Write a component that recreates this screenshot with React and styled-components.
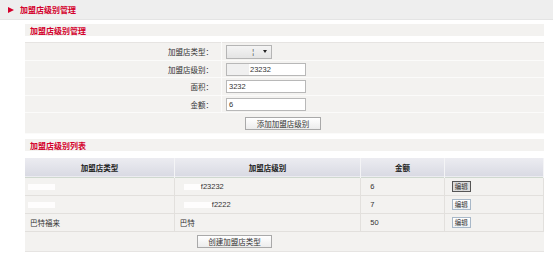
import styled, { createGlobalStyle } from "styled-components";

const GlobalStyle = createGlobalStyle`
  html, body {
    margin: 0;
    padding: 0;
    background: #fff;
    font-family: "Liberation Sans", "Noto Sans CJK SC", sans-serif;
    font-size: 7.5px;
    color: #333;
  }
`;

const Page = styled.div`
  width: 554px;
  height: 259px;
  overflow: hidden;
`;

const TopBar = styled.div`
  height: 20px;
  width: 553px;
  background: #eeeeee;
  border-bottom: 1px solid #e4e4e4;
  display: flex;
  align-items: center;
  gap: 6px;
  padding-left: 8px;
  box-sizing: border-box;
`;

const Arrow = styled.span`
  width: 0;
  height: 0;
  border-top: 3.5px solid transparent;
  border-bottom: 3.5px solid transparent;
  border-left: 6px solid #d4002c;
`;

const Title = styled.span`
  color: #d4002c;
  font-weight: bold;
  font-size: 8px;
`;

const Content = styled.div`
  width: 519px;
  margin-left: 25px;
`;

const SectionHeader = styled.div`
  margin-top: ${(p) => p.$top}px;
  height: 12px;
  background: #f3f2f0;
  display: flex;
  align-items: center;
  padding-left: 5px;
`;

const FormTable = styled.table`
  width: 100%;
  margin-top: 6px;
  border-collapse: collapse;
  background: #f3f2f0;
  border-top: 1px solid #e6e4e2;
`;

const FormRow = styled.tr`
  height: ${(p) => p.$h}px;
  border-bottom: 1px solid #fbfbfa;
`;

const Label = styled.td`
  width: 188px;
  text-align: right;
  padding: 0 8px 0 0;
  border-right: 1px solid #fbfbfa;
`;

const ValueCell = styled.td`
  padding: 0 0 0 4px;
`;

const FakeSelect = styled.div`
  width: 46px;
  height: 14px;
  box-sizing: border-box;
  border: 1px solid #b5b5b5;
  background: linear-gradient(#f4f4f4, #e4e4e4);
  display: flex;
  align-items: center;
  justify-content: flex-end;
  gap: 9px;
  padding-right: 4px;
  font-size: 7px;
`;

const Caret = styled.span`
  width: 0;
  height: 0;
  border-left: 2.5px solid transparent;
  border-right: 2.5px solid transparent;
  border-top: 3px solid #222;
`;

const TextInput = styled.div`
  width: 80px;
  height: 13px;
  box-sizing: border-box;
  border: 1px solid #b8b8b8;
  background: ${(p) => (p.$muted ? "linear-gradient(90deg, #f0f0f0 0, #f0f0f0 22px, #fff 22px)" : "#fff")};
  display: flex;
  align-items: center;
  padding-left: ${(p) => p.$indent}px;
  font-size: 7.5px;
  color: #333;
`;

const Button = styled.div`
  display: inline-flex;
  align-items: center;
  justify-content: center;
  width: ${(p) => p.$w}px;
  height: 13px;
  box-sizing: border-box;
  border: 1px solid #a9a9a9;
  background: linear-gradient(#ffffff, #ececec);
  font-size: 7.5px;
  color: #333;
`;

const CenterCell = styled.td`
  padding: 0 0 0 ${(p) => p.$pad}px;
`;

const ListTable = styled.table`
  width: 100%;
  margin-top: 7px;
  border-collapse: collapse;
  background: #f3f2f0;
`;

const HeadRow = styled.tr`
  height: 19px;
  background: linear-gradient(#ececf1, #d9dae3);
  border-bottom: 1px solid #cfd8cf;
`;

const Th = styled.th`
  width: ${(p) => p.$w}px;
  font-weight: bold;
  font-size: 7.5px;
  color: #222;
  border-right: 1px solid #f4f4f6;
  padding: 0;
`;

const BodyRow = styled.tr`
  height: 18px;
  border-bottom: 1px solid #e2e0dd;
`;

const Td = styled.td`
  padding: 0 0 0 ${(p) => p.$pad || 5}px;
  border-right: 1px solid #e2e0dd;
  color: #333;
`;

const FootRow = styled.tr`
  height: 20px;
  border-bottom: 1px solid #e6e4e2;
`;

const Redacted = styled.span`
  display: inline-block;
  vertical-align: middle;
  width: ${(p) => p.$w}px;
  height: 6px;
  background: rgba(255, 255, 255, 0.85);
  margin-left: ${(p) => p.$ml || 0}px;
`;

const EditButton = styled.div`
  display: inline-flex;
  align-items: center;
  justify-content: center;
  width: 19px;
  height: 11px;
  box-sizing: border-box;
  font-size: 6.5px;
  border: 1px solid ${(p) => (p.$active ? "#555" : "#a8b8c8")};
  background: ${(p) => (p.$active ? "#dcdcdc" : "linear-gradient(#ffffff, #eef2f6)")};
  color: #333;
`;

const rows = [
  { type: null, level: "f23232", levelGap: 17, amount: "6", active: true },
  { type: null, level: "f2222", levelGap: 28, amount: "7" },
  { type: "巴特福来", level: "巴特", amount: "50" },
];

export default function App() {
  return (
    <Page>
      <GlobalStyle />
      <TopBar>
        <Arrow />
        <Title>加盟店级别管理</Title>
      </TopBar>
      <Content>
        <SectionHeader $top={4}>
          <Title>加盟店级别管理</Title>
        </SectionHeader>
        <FormTable>
          <tbody>
            <FormRow $h={18}>
              <Label>加盟店类型：</Label>
              <ValueCell>
                <FakeSelect>
                  <span>¦</span>
                  <Caret />
                </FakeSelect>
              </ValueCell>
            </FormRow>
            <FormRow $h={17}>
              <Label>加盟店级别：</Label>
              <ValueCell>
                <TextInput $indent={23} $muted>23232</TextInput>
              </ValueCell>
            </FormRow>
            <FormRow $h={18}>
              <Label>面积：</Label>
              <ValueCell>
                <TextInput $indent={2}>3232</TextInput>
              </ValueCell>
            </FormRow>
            <FormRow $h={17}>
              <Label>金额：</Label>
              <ValueCell>
                <TextInput $indent={2}>6</TextInput>
              </ValueCell>
            </FormRow>
            <FormRow $h={21}>
              <CenterCell colSpan={2} $pad={220}>
                <Button $w={76}>添加加盟店级别</Button>
              </CenterCell>
            </FormRow>
          </tbody>
        </FormTable>

        <SectionHeader $top={5}>
          <Title>加盟店级别列表</Title>
        </SectionHeader>

        <ListTable>
          <thead>
            <HeadRow>
              <Th $w={150}>加盟店类型</Th>
              <Th $w={187}>加盟店级别</Th>
              <Th $w={83}>金额</Th>
              <Th $w={99}></Th>
            </HeadRow>
          </thead>
          <tbody>
            {rows.map((r, i) => (
              <BodyRow key={i}>
                <Td>{r.type ? r.type : <Redacted $w={27} $ml={-2} />}</Td>
                <Td>
                  {r.type ? (
                    r.level
                  ) : (
                    <>
                      <Redacted $w={r.levelGap} $ml={4} />
                      {r.level}
                    </>
                  )}
                </Td>
                <Td $pad={9}>{r.amount}</Td>
                <Td $pad={7}>
                  <EditButton $active={r.active}>编辑</EditButton>
                </Td>
              </BodyRow>
            ))}
            <FootRow>
              <CenterCell colSpan={4} $pad={172}>
                <Button $w={75}>创建加盟店类型</Button>
              </CenterCell>
            </FootRow>
          </tbody>
        </ListTable>
      </Content>
    </Page>
  );
}
